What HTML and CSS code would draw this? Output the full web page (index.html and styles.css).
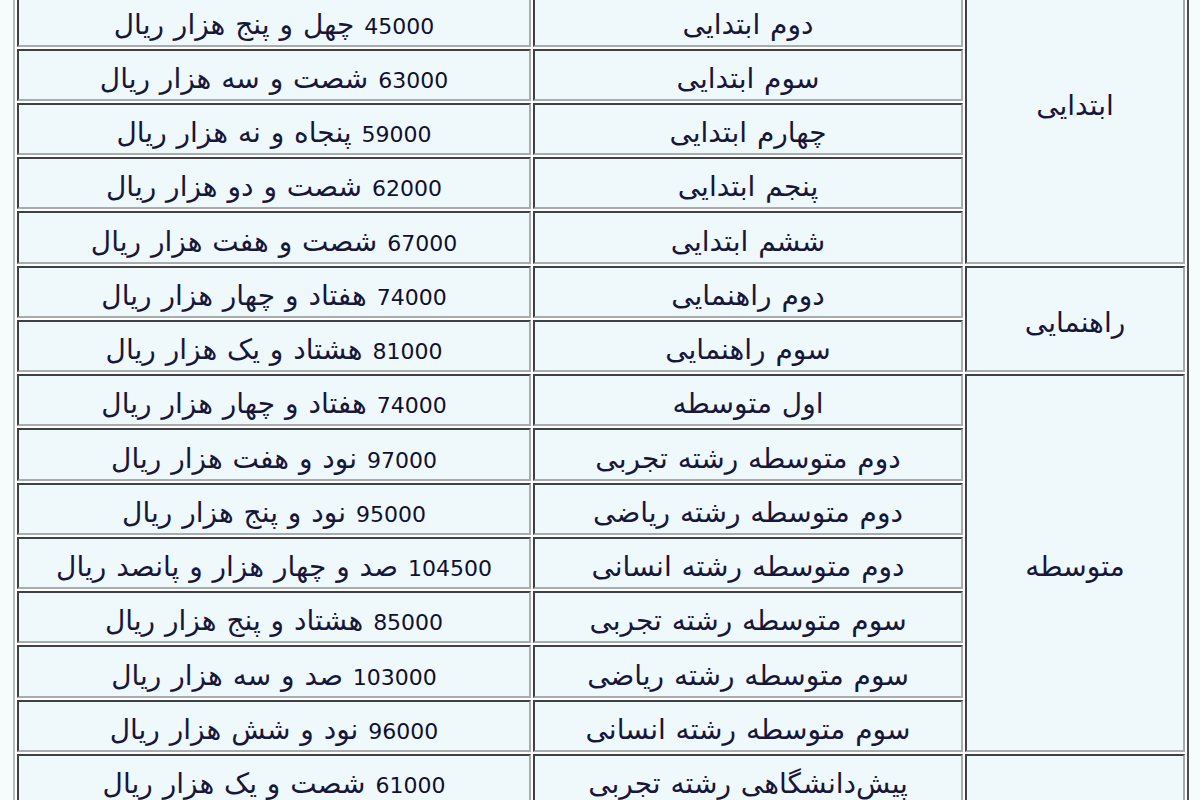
FILE: index.html
```html
<!DOCTYPE html>
<html lang="fa" dir="rtl">
<head>
<meta charset="utf-8">
<title>شهریه</title>
<link rel="stylesheet" href="styles.css">
</head>
<body>
<table class="fees">
  <tbody>
    <tr>
      <td class="level" rowspan="6">ابتدایی</td>
      <td class="grade">اول ابتدایی</td>
      <td class="price"><span class="num">41000</span> چهل و یک هزار ریال</td>
    </tr>
    <tr><td class="grade">دوم ابتدایی</td><td class="price"><span class="num">45000</span> چهل و پنج هزار ریال</td></tr>
    <tr><td class="grade">سوم ابتدایی</td><td class="price"><span class="num">63000</span> شصت و سه هزار ریال</td></tr>
    <tr><td class="grade">چهارم ابتدایی</td><td class="price"><span class="num">59000</span> پنجاه و نه هزار ریال</td></tr>
    <tr><td class="grade">پنجم ابتدایی</td><td class="price"><span class="num">62000</span> شصت و دو هزار ریال</td></tr>
    <tr><td class="grade">ششم ابتدایی</td><td class="price"><span class="num">67000</span> شصت و هفت هزار ریال</td></tr>
    <tr>
      <td class="level" rowspan="2">راهنمایی</td>
      <td class="grade">دوم راهنمایی</td>
      <td class="price"><span class="num">74000</span> هفتاد و چهار هزار ریال</td>
    </tr>
    <tr><td class="grade">سوم راهنمایی</td><td class="price"><span class="num">81000</span> هشتاد و یک هزار ریال</td></tr>
    <tr>
      <td class="level" rowspan="7">متوسطه</td>
      <td class="grade">اول متوسطه</td>
      <td class="price"><span class="num">74000</span> هفتاد و چهار هزار ریال</td>
    </tr>
    <tr><td class="grade">دوم متوسطه رشته تجربی</td><td class="price"><span class="num">97000</span> نود و هفت هزار ریال</td></tr>
    <tr><td class="grade">دوم متوسطه رشته ریاضی</td><td class="price"><span class="num">95000</span> نود و پنج هزار ریال</td></tr>
    <tr><td class="grade">دوم متوسطه رشته انسانی</td><td class="price"><span class="num">104500</span> صد و چهار هزار و پانصد ریال</td></tr>
    <tr><td class="grade">سوم متوسطه رشته تجربی</td><td class="price"><span class="num">85000</span> هشتاد و پنج هزار ریال</td></tr>
    <tr><td class="grade">سوم متوسطه رشته ریاضی</td><td class="price"><span class="num">103000</span> صد و سه هزار ریال</td></tr>
    <tr><td class="grade">سوم متوسطه رشته انسانی</td><td class="price"><span class="num">96000</span> نود و شش هزار ریال</td></tr>
    <tr>
      <td class="level" rowspan="3">پیش‌دانشگاهی</td>
      <td class="grade">پیش‌دانشگاهی رشته تجربی</td>
      <td class="price"><span class="num">61000</span> شصت و یک هزار ریال</td>
    </tr>
    <tr><td class="grade">پیش‌دانشگاهی رشته ریاضی</td><td class="price"><span class="num">63000</span> شصت و سه هزار ریال</td></tr>
    <tr><td class="grade">پیش‌دانشگاهی رشته انسانی</td><td class="price"><span class="num">65000</span> شصت و پنج هزار ریال</td></tr>
  </tbody>
</table>
</body>
</html>
```
FILE: styles.css
```css
html, body {
  margin: 0;
  padding: 0;
  background: #f6fbfc;
}
body {
  font-family: "DejaVu Sans", "Noto Sans", sans-serif;
  color: #17173a;
  overflow: hidden;
}
.fees {
  direction: rtl;
  margin: -64px 11px 0 0;
  width: 1176px;
  table-layout: fixed;
  border-collapse: separate;
  border-spacing: 2px;
  border-style: solid;
  border-width: 2px;
  border-color: #b9bcbe #4a4d50 #4a4d50 #b9bcbe;
  background: #ffffff;
}
.fees td {
  box-sizing: border-box;
  height: 52.25px;
  padding: 8px 4px 0;
  text-align: center;
  vertical-align: middle;
  background: #eff8fa;
  font-size: 28px;
  line-height: 1.2;
  word-spacing: 1px;
  white-space: nowrap;
  border-style: solid;
  border-width: 2px;
  border-color: #3e4144 #a9acae #a9acae #3e4144;
}
.fees .num {
  font-size: 22px;
  color: #101030;
}
.fees .level {
  width: 220px;
}
.fees .grade {
  width: 430px;
}
.fees .price {
  width: 514px;
}
```
